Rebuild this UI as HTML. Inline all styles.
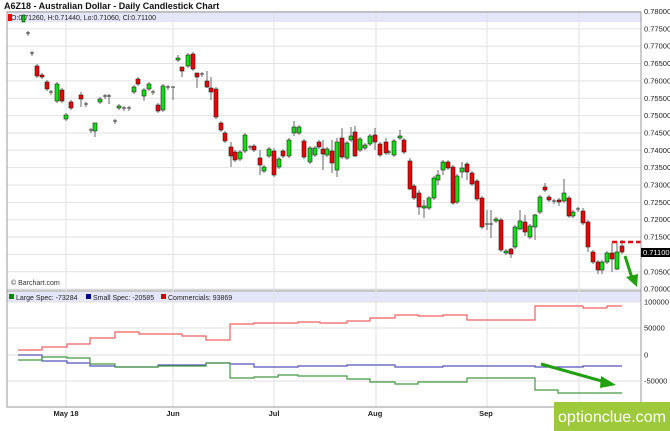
<!DOCTYPE html>
<html><head><meta charset="utf-8"><style>
body{margin:0;width:670px;height:431px;background:#fff;overflow:hidden;font-family:"Liberation Sans",sans-serif}
svg{position:absolute;left:0;top:0}
</style></head><body>
<svg id="s" width="670" height="431" xmlns="http://www.w3.org/2000/svg" font-family="Liberation Sans, sans-serif">
<text x="4" y="9" font-size="9" font-weight="bold" fill="#111">A6Z18 - Australian Dollar - Daily Candlestick Chart</text>
<rect x="7" y="12" width="634" height="10" fill="#e6e6fa"/>
<rect x="7" y="292" width="634" height="10" fill="#e6e6fa"/>
<rect x="7" y="289" width="634" height="3" fill="#c8c8c8"/>
<g id="grid" stroke="#e2e2e2" stroke-width="1"></g>
<g id="c"></g>
<line x1="612" y1="242" x2="641" y2="242" stroke="#dd1111" stroke-width="2.5" stroke-dasharray="5,3"/>
<rect x="7" y="12" width="634" height="395" fill="none" stroke="#999" stroke-width="1"/>
<text x="11" y="20" font-size="7" fill="#222">O:0.71260, H:0.71440, Lo:0.71060, Cl:0.71100</text>
<rect x="8" y="14" width="4" height="7" fill="#e00"/><rect x="22" y="15" width="3" height="7" fill="#1c1" stroke="#000" stroke-width=".5"/>
<text x="11" y="285" font-size="7" fill="#333">© Barchart.com</text>
<rect x="9" y="294" width="5" height="5" fill="#080"/><text x="16" y="300" font-size="7" fill="#222">Large Spec: -73284</text>
<rect x="86" y="294" width="5" height="5" fill="#008"/><text x="93" y="300" font-size="7" fill="#222">Small Spec: -20585</text>
<rect x="161" y="294" width="5" height="5" fill="#c00"/><text x="168" y="300" font-size="7" fill="#222">Commercials: 93869</text>
<g id="ax" font-size="7.5" fill="#222"></g>
<rect x="641" y="248" width="29" height="9" fill="#000"/><text x="643" y="255" font-size="7.5" fill="#fff">0.71100</text>
<polyline fill="none" stroke="#f06060" stroke-width="1.2" points="18,350 42,350 42,347 67,347 67,344 90,344 90,338 115,338 115,332 139,332 139,334 182,334 182,336 206,336 206,340 230,340 230,324 254,324 254,323 298,323 298,322 320,322 320,323 347,323 347,321 370,321 370,318 395,318 395,315 418,315 418,316 443,316 443,315 467,315 467,320 535,320 535,306 583,306 583,308 607,308 607,306 622,306"/>
<polyline fill="none" stroke="#5555bb" stroke-width="1.2" points="18,355 42,355 42,361 67,361 67,363 90,363 90,366 115,366 115,367 158,367 158,365 206,365 206,363 230,363 230,364 254,364 254,367 298,367 298,366 347,366 347,365 395,365 395,367 443,367 443,366 535,366 535,367 583,367 583,366 622,366"/>
<polyline fill="none" stroke="#449944" stroke-width="1.2" points="18,360 42,360 42,357 67,357 67,358 90,358 90,364 115,364 115,367 158,367 158,366 206,366 206,363 230,363 230,378 254,378 254,377 278,377 278,375 298,375 298,376 347,376 347,379 370,379 370,382 395,382 395,384 418,384 418,382 467,382 467,378 535,378 535,390 558,390 558,393 622,393"/>
<line x1="541" y1="364" x2="605" y2="382" stroke="#22a011" stroke-width="3"/>
<polygon points="601,376 616,385 600,388" fill="#22a011"/>
<line x1="625" y1="256" x2="632" y2="278" stroke="#22a011" stroke-width="3"/>
<polygon points="626,277 637,287 638,274" fill="#22a011"/>
<g font-size="7.5" font-weight="bold" fill="#222" text-anchor="middle">
<text x="66" y="416">May 18</text><text x="173" y="416">Jun</text><text x="274" y="416">Jul</text><text x="375" y="416">Aug</text><text x="486" y="416">Sep</text></g>
<rect x="554" y="402" width="116" height="29" fill="#9dc93b"/>
<text x="558" y="422" font-size="16" fill="#fff" textLength="108" lengthAdjust="spacingAndGlyphs">optionclue.com</text>
</svg>
<script>
var ns="http://www.w3.org/2000/svg";function E(p,t,a){var e=document.createElementNS(ns,t);for(var k in a)e.setAttribute(k,a[k]);document.getElementById(p).appendChild(e);}
[66,173,274,376,487,579].forEach(function(x){E("grid","line",{x1:x,y1:12,x2:x,y2:407});});
for(var i=0;i<=16;i++){var y=11.5+i*17.35;E("grid","line",{x1:7,y1:y,x2:641,y2:y});var t=document.createElementNS(ns,"text");t.setAttribute("x",644);t.setAttribute("y",y+2.5);t.textContent=(0.78-i*0.005).toFixed(5);if(i!=14)document.getElementById("ax").appendChild(t);}
[[302,"100000"],[328,"50000"],[355,"0"],[381,"-50000"]].forEach(function(a){E("grid","line",{x1:7,y1:a[0],x2:641,y2:a[0]});var t=document.createElementNS(ns,"text");t.setAttribute("x",644);t.setAttribute("y",a[0]+2.5);t.textContent=a[1];document.getElementById("ax").appendChild(t);});
var C=[[28,33,34,"d"],[32,53,54,"d"],[37,66,76,"r"],[42,75,77,"r"],[47,82,89,"r"],[51,92,93,"d"],[57,84,101,"g"],[62,90,101,"r"],[66,115,119,"g"],[71,102,108,"r"],[81,95,99,"r",92,107],[86,104,105,"d"],[91,130,131,"d"],[95,123,131,"g",128,137],[100,99,102,"g"],[105,96,97,"d"],[109,96,102,"d"],[115,121,122,"d"],[119,106,108,"g"],[124,108,109,"d"],[129,108,109,"d"],[134,87,92,"g"],[138,79,84,"r"],[144,90,96,"g",88,101],[149,84,89,"g"],[153,92,93,"d"],[158,105,111,"r"],[163,86,110,"g"],[168,87,88,"d"],[173,87,88,"d",87,100],
[178,58,60,"g",55,62],[182,67,71,"r",67,77],[188,55,66,"g"],[193,54,69,"r"],[197,73,77,"r",73,88],[202,74,75,"d"],[207,81,87,"r",71,88],[211,88,92,"r",77,100],[216,89,117,"r"],[221,123,130,"r"],[225,133,141,"r"],[231,147,156,"r",142,167],[235,152,160,"r"],[240,152,159,"g"],[245,135,151,"g"],[250,147,148,"d"],[254,146,150,"r"],[260,158,165,"r",150,175],[264,167,171,"g"],[269,149,156,"g"],[274,151,175,"r",148,177],[279,159,167,"g"],[283,151,156,"r"],[289,140,156,"g"],[294,127,133,"g",121,136],[299,127,133,"g"],[304,141,157,"r"],[310,148,162,"g"],[315,148,155,"g"],[319,142,147,"r"],[323,149,154,"r",140,170],[327,149,155,"g"],
[332,151,163,"r",140,173],[337,142,170,"g",138,177],[342,138,157,"r",128,159],[347,143,158,"g"],[351,136,140,"g",127,142],[355,132,156,"r",126,157],[360,139,150,"g"],[365,145,148,"g"],[370,136,144,"g"],[375,135,142,"r",128,150],[380,144,155,"r"],[386,142,153,"r",138,155],[389,152,153,"d"],[394,141,155,"g"],[400,136,138,"g",130,140],[404,140,152,"r"],[410,161,189,"r",158,190],[414,186,198,"r"],[419,193,207,"r",190,215],[424,206,208,"g",200,218],[429,198,208,"g"],[434,178,198,"g"],[438,175,180,"g",170,185],[443,162,170,"g",160,175],[448,162,168,"r"],[453,167,203,"r"],[457,176,202,"g"],[462,168,172,"g",162,178],[467,164,172,"r",162,180],[472,173,184,"r"],[477,181,199,"r"],[482,198,227,"r"],[487,224,225,"d",210,230],[491,224,225,"d",210,238],[496,219,221,"g"],[501,220,250,"r"],[506,251,253,"g"],[511,249,254,"r",248,258],[515,227,247,"g"],[520,221,229,"g",210,230],[525,222,232,"r",215,236],[530,226,237,"g"],[535,215,227,"g",214,240],[540,197,212,"g"],[545,187,190,"r",183,192],[549,197,200,"r"],[554,201,202,"d"],[559,200,202,"r",198,206],[564,193,201,"g",179,203],[569,198,216,"r"],[573,212,216,"g"],[578,209,210,"d"],[583,211,223,"r",208,225],[588,222,247,"r",220,252],[593,252,262,"r"],[598,262,270,"r",260,274],[602,262,270,"g",260,274],[607,253,262,"g"],[612,253,259,"r",243,272],[617,252,269,"g",243,270],[622,246,252,"r",240,254]];
C.forEach(function(c){var wt=c[4]||c[1]-2,wb=c[5]||c[2]+2;E("c","line",{x1:c[0],y1:wt,x2:c[0],y2:wb,stroke:"#666","stroke-width":1});
if(c[3]=="d")E("c","line",{x1:c[0]-2,y1:c[1],x2:c[0]+2,y2:c[1],stroke:"#333"});
else E("c","rect",{x:c[0]-2,y:c[1],width:4,height:c[2]-c[1],fill:c[3]=="r"?"#ee0000":"#11dd11",stroke:"#222","stroke-width":0.6});});
</script>
</body></html>
